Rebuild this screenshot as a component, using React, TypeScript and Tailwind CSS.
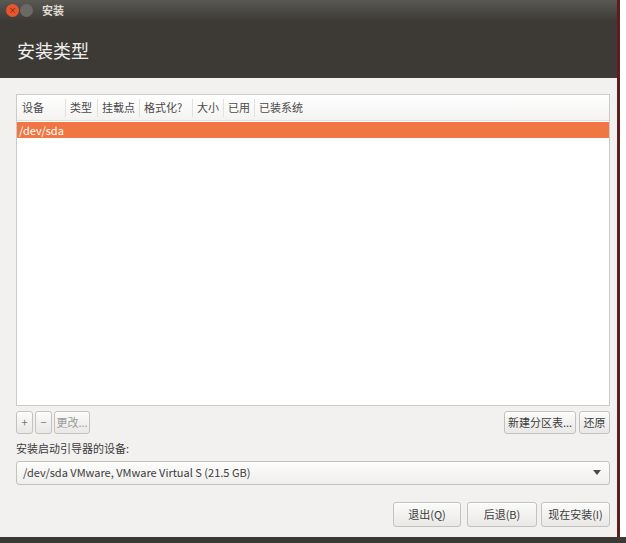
const font = { fontFamily: '"Noto Sans CJK SC", "Noto Sans", sans-serif' };

const columns = [
  { label: "设备", w: "w-[45px]" },
  { label: "类型", w: "w-[32px]" },
  { label: "挂载点", w: "w-[42px]" },
  { label: "格式化?", w: "w-[53px]" },
  { label: "大小", w: "w-[31px]" },
  { label: "已用", w: "w-[31px]" },
  { label: "已装系统", w: "w-[60px]" },
];

const Btn = ({ children, className = "" }: { children: React.ReactNode; className?: string }) => (
  <div
    className={`flex h-[23px] items-center justify-center rounded-[3px] border border-[#c4c2bf] bg-gradient-to-b from-[#fbfbfa] to-[#e9e8e6] text-[11px] text-[#3c3c3c] shadow-[0_1px_0_#fff_inset] ${className}`}
  >
    {children}
  </div>
);

export default function App() {
  return (
    <div className="flex h-[543px] w-[626px] flex-col bg-white" style={font}>
      <div className="flex h-[537px] w-[620px] flex-col border-r-[3px] border-[#5b1d1d]">
        {/* title bar */}
        <div className="flex h-[20px] items-center gap-[1px] bg-gradient-to-b from-[#5a5853] to-[#3e3c38] pl-[6px]">
          <div className="flex h-[13px] w-[13px] items-center justify-center rounded-full bg-[#e9552c] text-[8px] leading-none text-[#7a1f0c]">
            ×
          </div>
          <div className="h-[13px] w-[13px] rounded-full bg-[#6b6963]" />
          <span className="ml-[8px] text-[11px] font-bold text-[#dfdbd2]">安装</span>
        </div>
        {/* header */}
        <div className="flex h-[58px] items-center bg-[#3d3a36] pl-[17px] pt-[2px]">
          <span className="text-[18px] text-[#eeeeec]">安装类型</span>
        </div>
        {/* body */}
        <div className="flex flex-1 flex-col bg-[#f2f1f0] pl-[16px] pr-[7px] pt-[16px]">
          <div className="flex h-[312px] flex-col border border-[#cdcbc8] bg-white">
            <div className="flex h-[26px] items-center border-b border-[#e2e0dd] bg-gradient-to-b from-[#ffffff] to-[#f4f3f2] pl-[4px] text-[11px] text-[#4a4a4a]">
              {columns.map((c, i) => (
                <div
                  key={c.label}
                  className={`${c.w} flex h-[18px] items-center ${i < columns.length - 1 ? "border-r border-[#e3e1de]" : ""} ${i > 0 ? "pl-[4px]" : "pl-[1px]"}`}
                >
                  {c.label}
                </div>
              ))}
            </div>
            <div className="mt-[1px] flex h-[16px] items-center bg-[#f07644] pl-[2px] text-[11px] text-white">
              /dev/sda
            </div>
          </div>
          {/* partition buttons */}
          <div className="mt-[5px] flex items-center">
            <Btn className="w-[17px] text-[#777]">+</Btn>
            <Btn className="ml-[2px] w-[17px] text-[#777]">−</Btn>
            <Btn className="ml-[2px] w-[36px] text-[#9a9a9a]">更改...</Btn>
            <div className="flex-1" />
            <Btn className="w-[72px]">新建分区表...</Btn>
            <Btn className="ml-[3px] w-[31px]">还原</Btn>
          </div>
          <div className="mt-[6px] text-[11px] text-[#3c3c3c]">安装启动引导器的设备:</div>
          <div className="mt-[4px] flex h-[24px] items-center justify-between rounded-[3px] border border-[#c4c2bf] bg-gradient-to-b from-[#fdfdfc] to-[#efeeec] px-[6px] text-[11px] text-[#3c3c3c]">
            <span>/dev/sda VMware, VMware Virtual S (21.5 GB)</span>
            <svg width="8" height="5" viewBox="0 0 8 5" className="mr-[2px]">
              <path d="M0 0 L8 0 L4 5 Z" fill="#4a4a4a" />
            </svg>
          </div>
          {/* action buttons */}
          <div className="mt-[17px] flex justify-end">
            <Btn className="h-[25px] w-[68px] text-[11px]">退出(Q)</Btn>
            <Btn className="ml-[6px] h-[25px] w-[70px] text-[11px]">后退(B)</Btn>
            <Btn className="ml-[4px] h-[25px] w-[69px] text-[11px]">现在安装(I)</Btn>
          </div>
        </div>
      </div>
      <div className="h-[6px] w-full bg-[#3b3936]" />
    </div>
  );
}
